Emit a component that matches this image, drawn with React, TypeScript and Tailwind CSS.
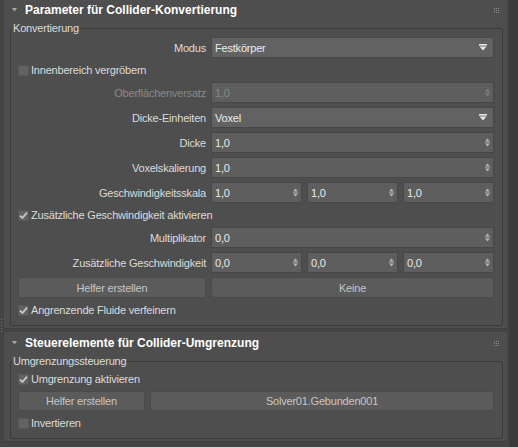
import React from "react";

type Kind = "spin" | "drop";

function Spinner({ dim = false }: { dim?: boolean }) {
  const c = dim ? "#7d7d7d" : "#b4b4b4";
  return (
    <svg width="5" height="9" viewBox="0 0 5 9" className="shrink-0">
      <polygon points="0,3.5 2.5,0.5 5,3.5" fill={c} />
      <rect x="0" y="4" width="5" height="1" fill={c} opacity="0.55" />
      <polygon points="0,5.5 2.5,8.5 5,5.5" fill={c} />
    </svg>
  );
}

function DropArrow() {
  return (
    <svg width="8" height="7" viewBox="0 0 8 7" className="shrink-0">
      <rect x="0" y="0" width="8" height="1.6" fill="#e6e6e6" />
      <polygon points="0.5,2.6 7.5,2.6 4,6.6" fill="#e6e6e6" />
    </svg>
  );
}

function Field({
  value,
  kind = "spin",
  disabled = false,
}: {
  value: string;
  kind?: Kind;
  disabled?: boolean;
}) {
  return (
    <div
      className={`flex-1 flex items-center justify-between h-full border border-[#474747] pl-[3px] ${
        kind === "drop" ? "bg-[#626262] pr-[6px]" : "bg-[#5e5e5e] pr-[3px]"
      }`}
    >
      <span className={disabled ? "text-[#8a8a8a]" : "text-[#ececec]"}>{value}</span>
      {kind === "spin" ? <Spinner dim={disabled} /> : <DropArrow />}
    </div>
  );
}

function Row({
  label,
  disabled = false,
  gapTop = true,
  children,
}: {
  label: string;
  disabled?: boolean;
  gapTop?: boolean;
  children: React.ReactNode;
}) {
  return (
    <div className={`flex h-[21px] gap-[5px] ${gapTop ? "mt-[4px]" : ""}`}>
      <div
        className={`w-[188px] flex items-center justify-end ${
          disabled ? "text-[#8a8a8a]" : "text-[#dcdcdc]"
        }`}
      >
        {label}
      </div>
      <div className="flex-1 flex gap-[5px]">{children}</div>
    </div>
  );
}

function CheckBox({ checked }: { checked: boolean }) {
  return (
    <div className="w-[11px] h-[11px] bg-[#626262] border border-[#575757] flex items-center justify-center shrink-0">
      {checked && (
        <svg width="9" height="9" viewBox="0 0 9 9">
          <path d="M1 4.6 L3.4 7 L8 1.6" stroke="#c8c8c8" strokeWidth="1.8" fill="none" />
        </svg>
      )}
    </div>
  );
}

function CheckRow({
  label,
  checked,
  h = "h-[24px]",
}: {
  label: string;
  checked: boolean;
  h?: string;
}) {
  return (
    <div className={`flex items-center ${h}`}>
      <CheckBox checked={checked} />
      <span className="ml-[2px] text-[#dcdcdc]">{label}</span>
    </div>
  );
}

function Btn({ label, width }: { label: string; width: string }) {
  return (
    <div
      className={`${width} h-full flex items-center justify-center bg-[#5b5b5b] border border-[#4a4a4a] rounded-[3px] text-[#c6c6c6]`}
    >
      {label}
    </div>
  );
}

function Grip() {
  return (
    <div className="ml-auto grid grid-cols-3 gap-[1px]">
      {Array.from({ length: 9 }).map((_, i) => (
        <span key={i} className="w-[1px] h-[1px] bg-[#8e8e8e]" />
      ))}
    </div>
  );
}

function Rollout({
  title,
  legend,
  className = "",
  children,
}: {
  title: string;
  legend: string;
  className?: string;
  children: React.ReactNode;
}) {
  return (
    <div className={`bg-[#4e4e4e] border-b border-[#3f3f3f] rounded-t-[2px] ${className}`}>
      <div className="flex items-center h-[22px] pl-[8px] pr-[8px]">
        <svg width="5" height="4" viewBox="0 0 5 4">
          <polygon points="0,0 5,0 2.5,3.5" fill="#a8a8a8" />
        </svg>
        <span className="ml-[8px] text-[12px] font-bold text-white tracking-normal">{title}</span>
        <Grip />
      </div>
      <fieldset className="ml-[6px] mr-[4px] mb-[2px] pl-[1px] border border-[#393939] rounded-[2px]">
        <legend className="px-[1px] leading-[14px] text-[#dcdcdc]">{legend}</legend>
        <div className="pl-[6px] pr-[8px] pb-[3px]">{children}</div>
      </fieldset>
    </div>
  );
}

export default function App() {
  return (
    <div className="relative flex w-[518px] h-[447px] overflow-hidden bg-[#444444] font-['Liberation_Sans',Arial,sans-serif] text-[11px] leading-[14px] tracking-[-0.2px]">
      <div className="w-[509px] pl-[4px] pr-[2px]">
        <Rollout title="Parameter für Collider-Konvertierung" legend="Konvertierung" className="-mt-[1px]">
          <div className="pt-[2px]">
            <Row label="Modus" gapTop={false}>
              <Field value="Festkörper" kind="drop" />
            </Row>
            <CheckRow label="Innenbereich vergröbern" checked={false} />
            <Row label="Oberflächenversatz" disabled gapTop={false}>
              <Field value="1,0" disabled />
            </Row>
            <Row label="Dicke-Einheiten">
              <Field value="Voxel" kind="drop" />
            </Row>
            <Row label="Dicke">
              <Field value="1,0" />
            </Row>
            <Row label="Voxelskalierung">
              <Field value="1,0" />
            </Row>
            <Row label="Geschwindigkeitsskala">
              <Field value="1,0" />
              <Field value="1,0" />
              <Field value="1,0" />
            </Row>
            <CheckRow label="Zusätzliche Geschwindigkeit aktivieren" checked />
            <Row label="Multiplikator" gapTop={false}>
              <Field value="0,0" />
            </Row>
            <Row label="Zusätzliche Geschwindigkeit">
              <Field value="0,0" />
              <Field value="0,0" />
              <Field value="0,0" />
            </Row>
            <div className="flex h-[21px] gap-[5px] mt-[4px]">
              <Btn label="Helfer erstellen" width="w-[188px]" />
              <Btn label="Keine" width="flex-1" />
            </div>
            <CheckRow label="Angrenzende Fluide verfeinern" checked />
          </div>
        </Rollout>

        <Rollout title="Steuerelemente für Collider-Umgrenzung" legend="Umgrenzungssteuerung" className="mt-[3px]">
          <CheckRow label="Umgrenzung aktivieren" checked h="h-[22px]" />
          <div className="flex h-[20px] gap-[5px] mt-[1px]">
            <Btn label="Helfer erstellen" width="w-[127px]" />
            <Btn label="Solver01.Gebunden001" width="flex-1" />
          </div>
          <CheckRow label="Invertieren" checked={false} />
        </Rollout>
      </div>
      <div className="flex-1 bg-[#3a3a3a]" />

      <div className="absolute left-[1px] top-[319px] flex flex-col gap-[2px]">
        {Array.from({ length: 5 }).map((_, i) => (
          <span key={i} className="w-[1px] h-[1px] bg-[#7a7a7a]" />
        ))}
      </div>
    </div>
  );
}
